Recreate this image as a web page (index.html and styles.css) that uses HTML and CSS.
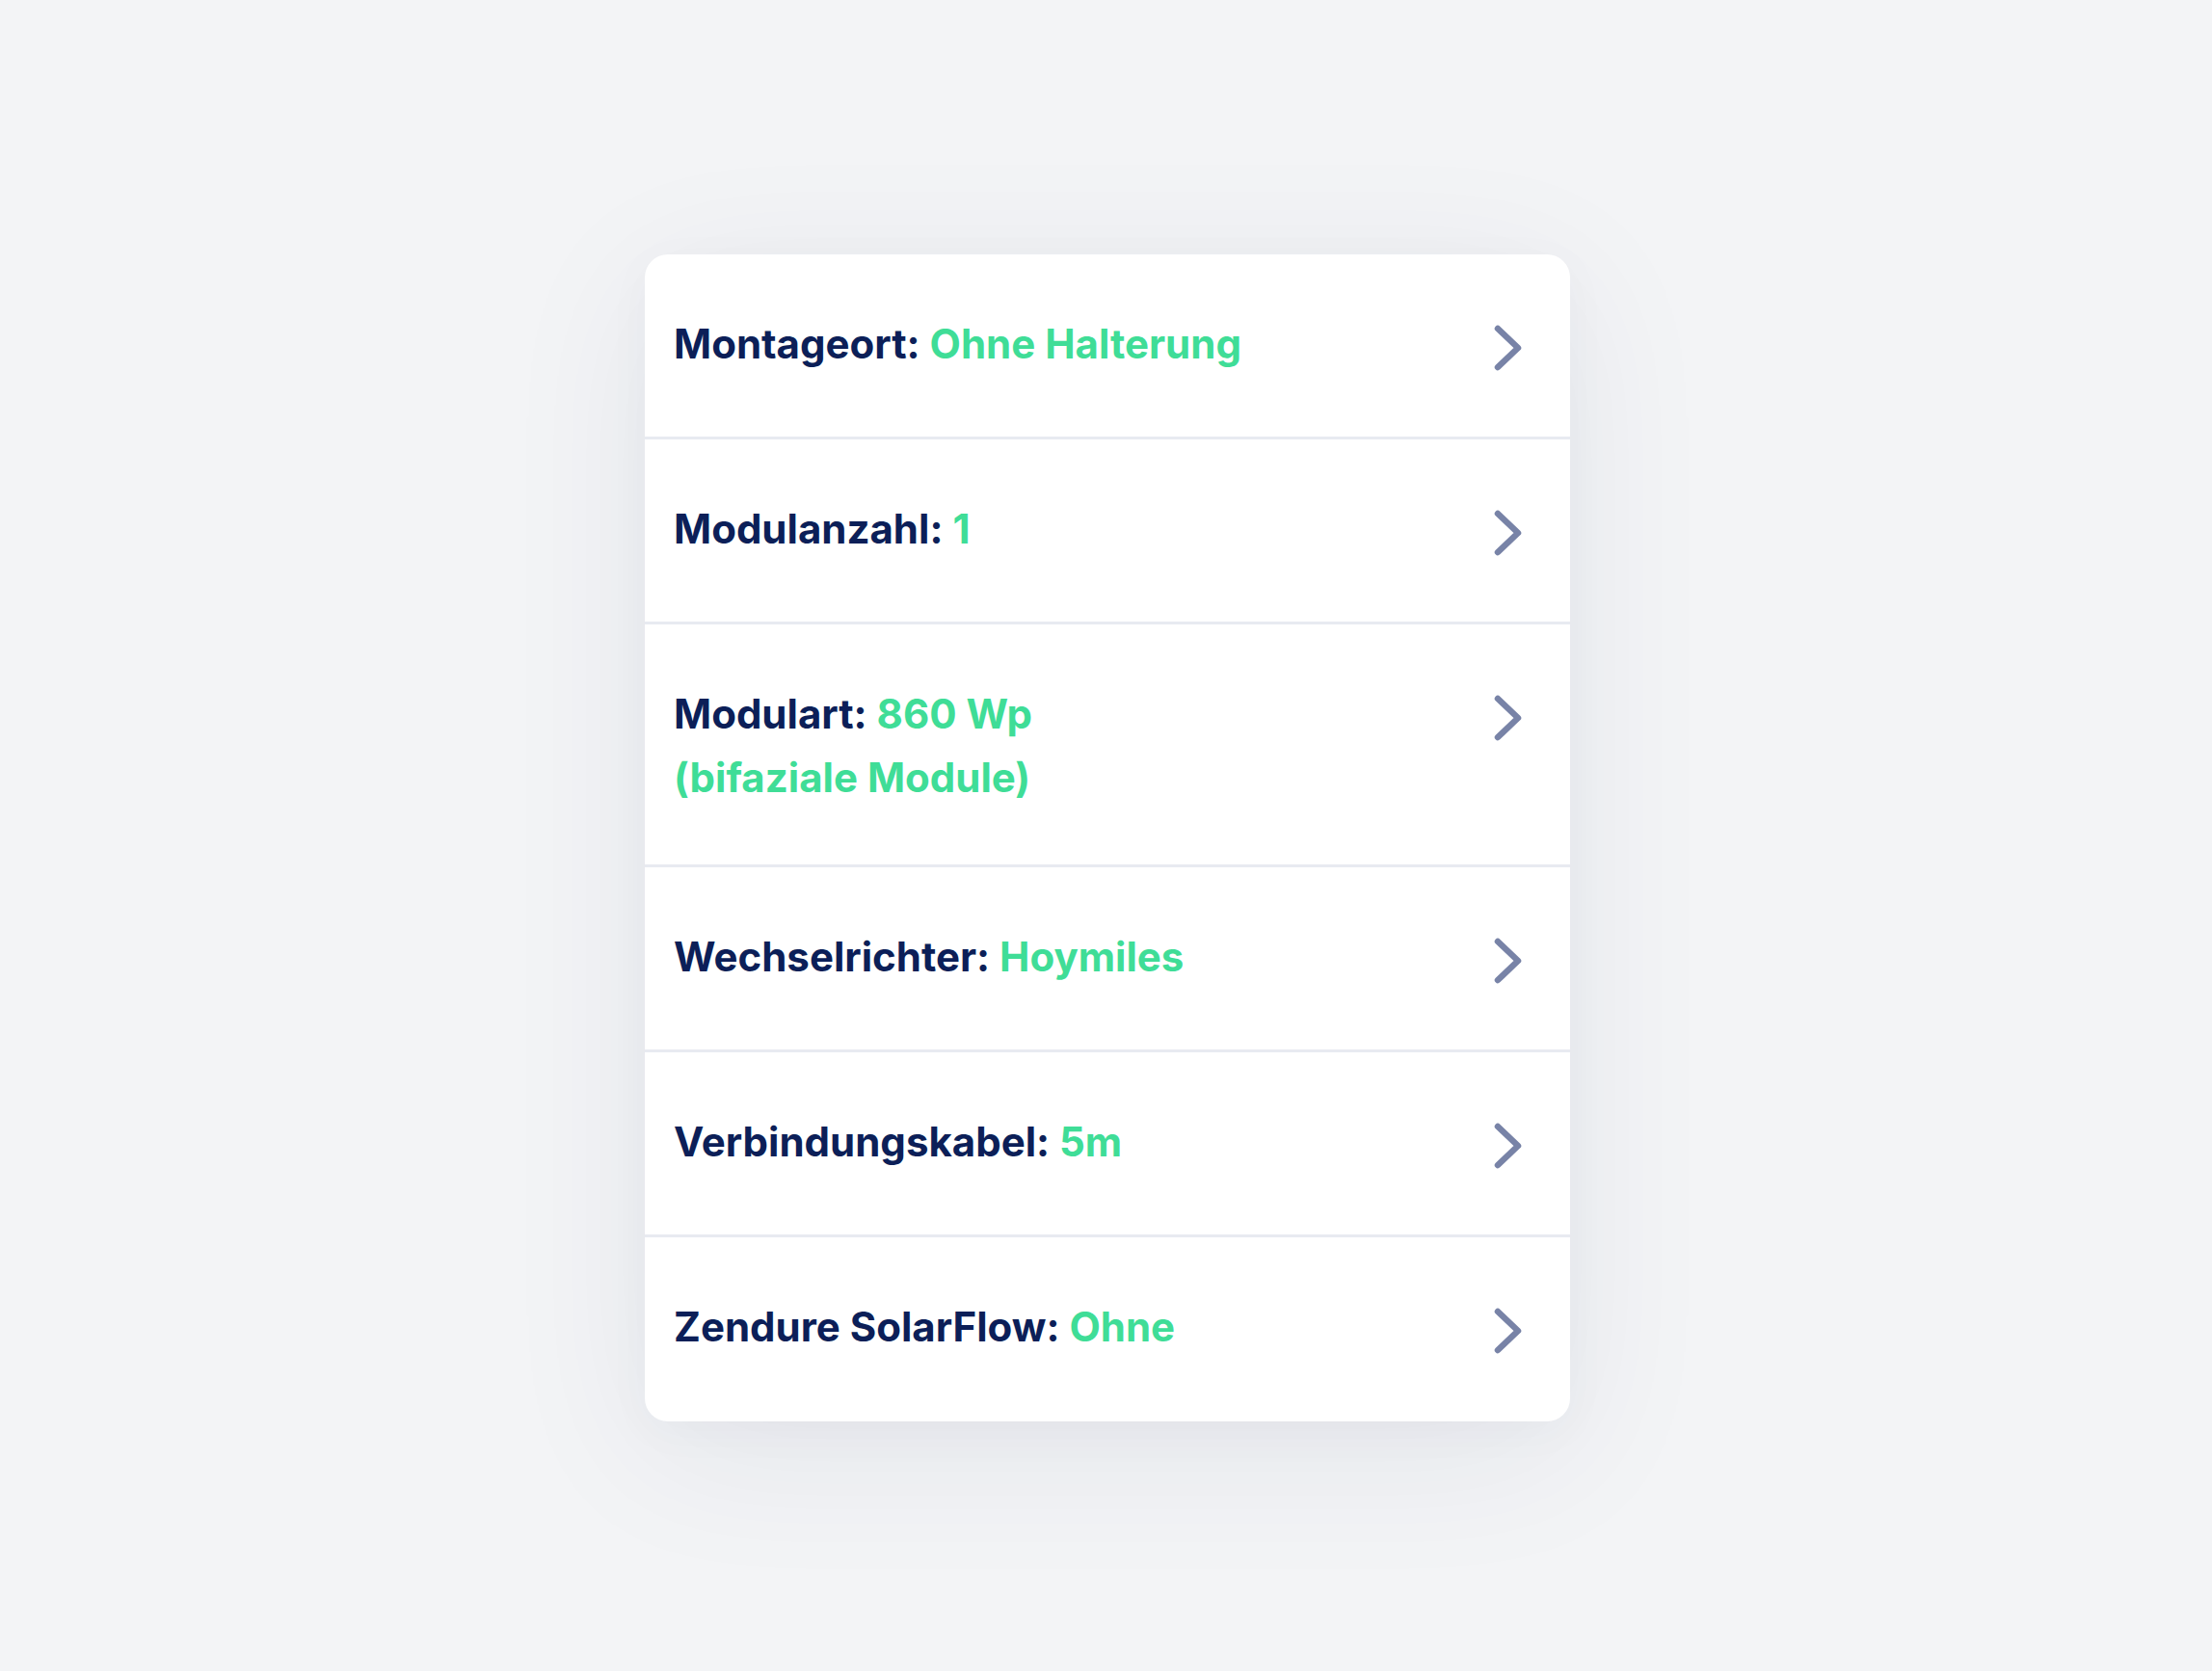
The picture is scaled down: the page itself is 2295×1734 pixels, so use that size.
FILE: index.html
```html
<!DOCTYPE html>
<html lang="de">
<head>
<meta charset="utf-8">
<title>Konfiguration</title>
<link rel="stylesheet" href="styles.css">
</head>
<body>
<main class="page">
  <section class="card">
    <div class="row">
      <p class="text"><span class="label">Montageort:</span> <span class="value">Ohne Halterung</span></p>
      <svg class="chev" viewBox="0 0 32 50"><path d="M5 5 L26 25 L5 45"/></svg>
    </div>
    <div class="row">
      <p class="text"><span class="label">Modulanzahl:</span> <span class="value">1</span></p>
      <svg class="chev" viewBox="0 0 32 50"><path d="M5 5 L26 25 L5 45"/></svg>
    </div>
    <div class="row">
      <p class="text"><span class="label">Modulart:</span> <span class="value">860 Wp<br>(bifaziale Module)</span></p>
      <svg class="chev" viewBox="0 0 32 50"><path d="M5 5 L26 25 L5 45"/></svg>
    </div>
    <div class="row">
      <p class="text"><span class="label">Wechselrichter:</span> <span class="value">Hoymiles</span></p>
      <svg class="chev" viewBox="0 0 32 50"><path d="M5 5 L26 25 L5 45"/></svg>
    </div>
    <div class="row">
      <p class="text"><span class="label">Verbindungskabel:</span> <span class="value">5m</span></p>
      <svg class="chev" viewBox="0 0 32 50"><path d="M5 5 L26 25 L5 45"/></svg>
    </div>
    <div class="row">
      <p class="text"><span class="label">Zendure SolarFlow:</span> <span class="value">Ohne</span></p>
      <svg class="chev" viewBox="0 0 32 50"><path d="M5 5 L26 25 L5 45"/></svg>
    </div>
  </section>
</main>
</body>
</html>
```

FILE: styles.css
```css
html, body {
  margin: 0;
  padding: 0;
}
body {
  background: #f3f4f6;
  font-family: Inter, "Noto Sans", "Liberation Sans", sans-serif;
  min-height: 1734px;
}
.page {
  padding: 264px 0 0 669px;
}
.card {
  width: 960px;
  background: #ffffff;
  border-radius: 24px;
  overflow: hidden;
  box-shadow: 0 30px 160px rgba(30, 40, 80, 0.07), 0 10px 50px rgba(30, 40, 80, 0.03);
}
.row {
  box-sizing: border-box;
  min-height: 192px;
  display: flex;
  align-items: flex-start;
  justify-content: space-between;
  padding: 60px 48px 57px 30px;
  border-bottom: 3px solid #e8eaf1;
}
.row:last-child {
  border-bottom: none;
  min-height: 191px;
}
.text {
  margin: 0;
  font-size: 42px;
  line-height: 66px;
  font-weight: 700;
}
.label {
  color: #0c1f58;
}
.value {
  color: #3fdd97;
}
.chev {
  width: 32px;
  height: 50px;
  margin-top: 12px;
  flex: none;
}
.chev path {
  fill: none;
  stroke: #7883a7;
  stroke-width: 6.5;
  stroke-linecap: round;
  stroke-linejoin: round;
}
```
